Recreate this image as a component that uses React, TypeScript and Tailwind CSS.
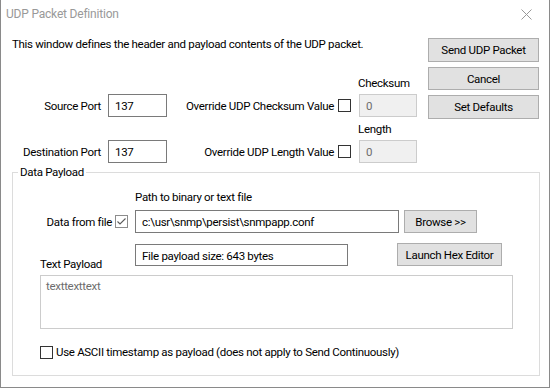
import React from "react";

function Btn({ label, className = "" }: { label: string; className?: string }) {
  return (
    <div
      className={
        "flex items-center justify-center bg-[#e1e1e1] border border-[#adadad] text-black " +
        className
      }
    >
      {label}
    </div>
  );
}

function Box({ text, className = "" }: { text: string; className?: string }) {
  return <div className={"border pl-[6px] pt-[3px] " + className}>{text}</div>;
}

function Check({ checked = false, className = "" }: { checked?: boolean; className?: string }) {
  return (
    <div className={"w-[13px] h-[13px] border bg-white shrink-0 " + className}>
      {checked && (
        <svg width="11" height="11" viewBox="0 0 11 11">
          <path d="M1.5 5.5 L4 8 L9.5 2.5" stroke="#5a5a5a" strokeWidth="1.1" fill="none" />
        </svg>
      )}
    </div>
  );
}

export default function App() {
  return (
    <div className="w-[551px] h-[389px] bg-white overflow-hidden font-['Roboto',sans-serif] text-[11.5px] tracking-[-0.3px] leading-[16px] text-black">
      <div className="w-[550px] h-[388px] border-l border-r border-b border-[#8a8a8a] flex flex-col">
        {/* title bar */}
        <div className="h-[27px] flex items-center justify-between shrink-0">
          <div className="pl-[5px] text-[12px] tracking-[-0.2px] text-[#999999]">UDP Packet Definition</div>
          <div className="w-[46px] h-[27px] flex items-center justify-center pt-[1px]">
            <svg width="11" height="11" viewBox="0 0 11 11">
              <path d="M0.5 0.5 L10.5 10.5 M10.5 0.5 L0.5 10.5" stroke="#999" strokeWidth="1" />
            </svg>
          </div>
        </div>

        {/* top section */}
        <div className="flex items-start">
          <div className="flex-1">
            <div className="mt-[9px] pl-[11px] h-[16px]">
              This window defines the header and payload contents of the UDP packet.
            </div>
            <div className="mt-[23px] pl-[357px] h-[16px]">Checksum</div>
            <div className="mt-[3px] flex items-center h-[23px]">
              <div className="w-[100px] text-right">Source Port</div>
              <Box text="137" className="ml-[7px] w-[59px] h-[23px] border-[#7a7a7a]" />
              <div className="w-[167px] text-right">Override UDP Checksum Value</div>
              <Check className="ml-[4px] border-[#333]" />
              <Box
                text="0"
                className="ml-[8px] w-[58px] h-[23px] border-[#cccccc] bg-[#f0f0f0] text-[#6d6d6d]"
              />
            </div>
            <div className="mt-[4px] pl-[357px] h-[16px]">Length</div>
            <div className="mt-[3px] flex items-center h-[23px]">
              <div className="w-[100px] text-right">Destination Port</div>
              <Box text="137" className="ml-[7px] w-[59px] h-[23px] border-[#7a7a7a]" />
              <div className="w-[167px] text-right">Override UDP Length Value</div>
              <Check className="ml-[4px] border-[#333]" />
              <Box
                text="0"
                className="ml-[8px] w-[58px] h-[23px] border-[#cccccc] bg-[#f0f0f0] text-[#6d6d6d]"
              />
            </div>
          </div>
          <div className="pt-[11px] pr-[10px] flex flex-col">
            <Btn label="Send UDP Packet" className="w-[111px] h-[24px]" />
            <Btn label="Cancel" className="w-[111px] h-[23px] mt-[5px]" />
            <Btn label="Set Defaults" className="w-[111px] h-[24px] mt-[5px]" />
          </div>
        </div>

        {/* data payload group */}
        <fieldset className="mt-[1px] ml-[11px] w-[528px] h-[212px] border border-[#dcdcdc]">
          <legend className="ml-[5px] px-[2px] leading-[16px]">Data Payload</legend>
          <div className="mt-[9px] pl-[122px] h-[16px]">Path to binary or text file</div>
          <div className="mt-[5px] flex items-center h-[23px]">
            <div className="w-[122px] flex items-center justify-end pr-[7px]">
              <span>Data from file</span>
              <Check checked className="ml-[3px] border-[#8c8c8c]" />
            </div>
            <Box
              text="c:\usr\snmp\persist\snmpapp.conf"
              className="w-[264px] h-[23px] border-[#7a7a7a]"
            />
            <Btn label="Browse >>" className="ml-[5px] w-[73px] h-[23px]" />
          </div>
          <div className="mt-[11px] flex items-start h-[28px]">
            <div className="w-[122px] pt-[12px] pl-[27px]">Text Payload</div>
            <Box
              text="File payload size: 643 bytes"
              className="w-[213px] h-[22px] border-[#7a7a7a]"
            />
            <Btn label="Launch Hex Editor" className="ml-[49px] mt-[-1px] w-[105px] h-[23px]" />
          </div>
          <div className="mt-[3px] ml-[27px] w-[473px] h-[54px] border border-[#cccccc] pl-[5px] pt-[2px] text-[#6d6d6d]">
            texttexttext
          </div>
          <div className="mt-[15px] ml-[27px] flex items-center h-[16px]">
            <Check className="border-[#333]" />
            <span className="ml-[3px]">
              Use ASCII timestamp as payload (does not apply to Send Continuously)
            </span>
          </div>
        </fieldset>
      </div>
    </div>
  );
}
